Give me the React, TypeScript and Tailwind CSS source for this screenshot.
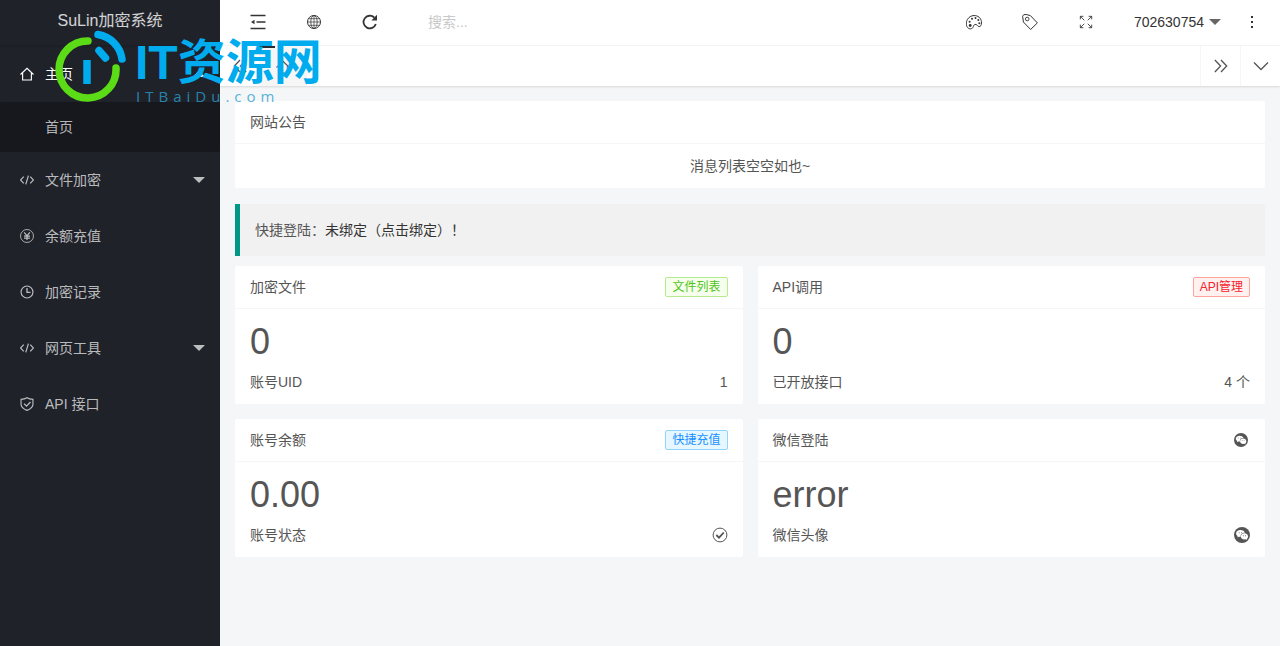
import type { ReactNode } from 'react';

type IconProps = { className?: string; children?: ReactNode };

function Icon({ className = 'size-4', children }: IconProps) {
  return (
    <svg
      viewBox="0 0 16 16"
      className={className}
      fill="none"
      stroke="currentColor"
      strokeWidth={1}
      aria-hidden="true"
    >
      {children}
    </svg>
  );
}

const HomeIcon = () => (
  <Icon className="size-3.5">
    <path d="M.6 8.6 8 1.4l7.4 7.2M3 6.6v8.2h10V6.6" strokeWidth={1.3} />
  </Icon>
);

const CodeIcon = () => (
  <Icon className="size-3.5">
    <path d="M4.3 4.2.6 8l3.7 3.8M11.7 4.2 15.4 8l-3.7 3.8M9.6 3 6.6 13" strokeWidth={1.4} />
  </Icon>
);

const YenIcon = () => (
  <Icon className="size-3.5">
    <circle cx="8" cy="8" r="7.4" />
    <path d="m4.8 3.8 3.2 4 3.2-4M8 7.8v4.8M4.6 8.2h6.8M4.6 10.4h6.8" strokeWidth={1.4} />
  </Icon>
);

const ClockIcon = () => (
  <Icon className="size-3.5">
    <circle cx="8" cy="8" r="6.8" strokeWidth={1.3} />
    <path d="M8 3.4v5h4" strokeWidth={1.5} />
  </Icon>
);

const ShieldIcon = () => (
  <Icon className="size-3.5">
    <path
      d="M8 .8c2 1.3 4.4 1.8 6.800 1.900v5.700c0 3.200-2.800 5.400-6.800 6.900-4-1.500-6.800-3.700-6.800-6.900V2.700C3.600 2.600 6 2.100 8 .8Z"
      strokeWidth={1.3}
    />
    <path d="m4.6 7.600 2.800 2.800L12 5.800" strokeWidth={1.5} />
  </Icon>
);

const MenuIcon = () => (
  <Icon>
    <path d="M.5 1.500h15M6.500 8h9M.5 14.500h15" strokeWidth={1.400} />
    <path d="M4.500 5.800v4.400L1 8Z" fill="currentColor" stroke="none" />
  </Icon>
);

const GlobeIcon = () => (
  <Icon>
    <circle cx="8" cy="8" r="6.500" />
    <ellipse cx="8" cy="8" rx="3.200" ry="6.500" strokeWidth={0.8} />
    <path d="M8 1.500v13M1.500 8h13M2.500 4.700h11M2.500 11.300h11" strokeWidth={0.7} />
  </Icon>
);

const RefreshIcon = () => (
  <Icon>
    <path d="M13.800 10A6.300 6.300 0 1 1 12.400 3.700" strokeWidth={1.800} />
    <path d="M15 .8v5.800H9.400Z" fill="currentColor" stroke="none" />
  </Icon>
);

const PaletteIcon = () => (
  <Icon>
    <path d="M2.300 14.200C-.3 12.200-.1 8.200 1.400 5.500 3.100 2.500 6.200 1.200 9.300 1.600c3.900.5 6.400 3.700 6.200 7.400-.1 2.400-1.100 3.700-2.400 3.600-1.500-.1-1.500-1.600-3-2.100-1.500-.4-2.400.6-2.700 1.900-.5 2-2.900 3.300-5.100 1.800Z" />
    <g fill="currentColor" stroke="none">
      <circle cx="4.200" cy="11.500" r="1.400" />
      <circle cx="3.600" cy="7.700" r="1" />
      <circle cx="6" cy="4.800" r="1" />
      <circle cx="9.500" cy="4.100" r="1" />
      <circle cx="12.300" cy="6" r="1" />
      <circle cx="13.300" cy="9.200" r="1" />
    </g>
  </Icon>
);

const TagIcon = () => (
  <Icon>
    <path d="M.6 2.200 1.400 8l7.200 7.500 6.800-6.600L8.400 1.600 4.200.5 1.800.7Z" strokeLinejoin="round" />
    <circle cx="5.200" cy="5" r="1.800" strokeWidth={0.9} />
  </Icon>
);

const ExpandIcon = () => (
  <Icon className="size-3.5">
    <path d="M1.500 5V1.500H5M11 1.500h3.500V5M14.500 11v3.500H11M5 14.500H1.500V11M1.500 1.500 6 6M14.500 1.500 10 6M14.500 14.500 10 10M1.500 14.500 6 10" />
  </Icon>
);

const DotsIcon = () => (
  <Icon>
    <g fill="currentColor" stroke="none">
      <rect x="7" y="2" width="2" height="2" />
      <rect x="7" y="7" width="2" height="2" />
      <rect x="7" y="12" width="2" height="2" />
    </g>
  </Icon>
);

const DoubleChevron = ({ className }: IconProps) => (
  <Icon className={className}>
    <path d="M1 1.200 7.500 8 1 14.800M8 1.200 14.500 8 8 14.800" strokeWidth={1.500} />
  </Icon>
);

const ChevronDown = () => (
  <Icon>
    <path d="m1 4.500 7 7 7-7" strokeWidth={1.300} />
  </Icon>
);

const CheckCircle = () => (
  <Icon>
    <circle cx="8" cy="8" r="6.900" />
    <path d="m4.300 8 2.700 2.700 4.800-5.200" strokeWidth={1.800} />
  </Icon>
);

const WechatIcon = ({ className }: IconProps) => (
  <Icon className={className}>
    <circle cx="8" cy="8" r="8" fill="currentColor" stroke="none" />
    <g fill="#fff" stroke="none">
      <path d="M6.400 3.100c-2.500 0-4.300 1.500-4.300 3.500 0 1.100.6 2 1.600 2.600l-.4 1.400 1.600-.9 1.700.2c-.3-2.500 1.700-4.200 4.200-4.200-.4-1.500-2.200-2.600-4.400-2.600Z" />
      <path d="M14.100 9.400c0-1.700-1.600-3.100-3.600-3.100S6.900 7.700 6.900 9.400s1.600 3.100 3.600 3.100l1.400-.2 1.300.8-.3-1.200c.8-.7 1.200-1.500 1.200-2.500Z" />
    </g>
    <g fill="currentColor" stroke="none">
      <circle cx="5.100" cy="5.700" r=".5" />
      <circle cx="7.700" cy="5.700" r=".5" />
      <circle cx="9.300" cy="8.700" r=".5" />
      <circle cx="11.500" cy="8.700" r=".5" />
    </g>
  </Icon>
);

function Caret({ className = '' }: { className?: string }) {
  return (
    <svg viewBox="0 0 12 6" className={`h-1.5 w-3 ${className}`} fill="currentColor" aria-hidden="true">
      <path d="M0 0h12L6 6Z" />
    </svg>
  );
}

const menuItems = [
  { label: '文件加密', icon: <CodeIcon />, expandable: true },
  { label: '余额充值', icon: <YenIcon /> },
  { label: '加密记录', icon: <ClockIcon /> },
  { label: '网页工具', icon: <CodeIcon />, expandable: true },
  { label: 'API 接口', icon: <ShieldIcon /> },
];

function Sidebar() {
  return (
    <aside className="w-[220px] shrink-0 bg-[#20222a] text-white/70">
      <div className="flex h-[45px] items-center justify-center pb-1 text-base text-white/80 shadow-[0_1px_2px_rgba(0,0,0,0.15)]">
        SuLin加密系统
      </div>
      <nav className="pt-px">
        <a href="#home" className="flex h-14 items-center gap-[11px] pr-[15px] pl-5 text-white">
          <HomeIcon />
          <span className="flex-1">主页</span>
          <Caret className="rotate-180" />
        </a>
        <a href="#index" className="flex h-[50px] items-center rounded-xs bg-[#17181d] pl-[45px]">
          首页
        </a>
        {menuItems.map((item) => (
          <a key={item.label} href="#menu" className="flex h-14 items-center gap-[11px] pr-[15px] pl-5">
            {item.icon}
            <span className="flex-1">{item.label}</span>
            {item.expandable && <Caret />}
          </a>
        ))}
      </nav>
    </aside>
  );
}

function HeaderButton({ label, children }: { label: string; children: ReactNode }) {
  return (
    <button type="button" aria-label={label} className="flex h-full w-14 items-center justify-center">
      {children}
    </button>
  );
}

function Header() {
  return (
    <header className="flex h-[46px] items-center border-b border-[#f6f6f6] bg-white pr-2 pb-px pl-2.5 text-[#333]">
      <HeaderButton label="侧边伸缩">
        <MenuIcon />
      </HeaderButton>
      <HeaderButton label="前台">
        <GlobeIcon />
      </HeaderButton>
      <HeaderButton label="刷新">
        <RefreshIcon />
      </HeaderButton>
      <input
        type="text"
        aria-label="搜索"
        placeholder="搜索..."
        className="ml-[30px] w-40 min-w-0 bg-transparent outline-none placeholder:text-[#c8c8c8]"
      />
      <div className="ml-auto flex h-full items-center">
        <HeaderButton label="主题">
          <PaletteIcon />
        </HeaderButton>
        <HeaderButton label="便签">
          <TagIcon />
        </HeaderButton>
        <HeaderButton label="全屏">
          <ExpandIcon />
        </HeaderButton>
        <button type="button" className="flex h-full items-center gap-[5px] pr-[11px] pl-5">
          702630754
          <Caret className="text-[#666]" />
        </button>
        <button type="button" aria-label="更多" className="flex h-full w-10 items-center justify-center">
          <DotsIcon />
        </button>
      </div>
    </header>
  );
}

function TabsBar() {
  return (
    <div className="flex h-10 bg-white text-[#555] shadow-[0_1px_2px_rgba(0,0,0,0.12)]">
      <button type="button" aria-label="向左" className="flex w-[39px] items-center justify-center">
        <DoubleChevron className="size-3.5 rotate-180" />
      </button>
      <button
        type="button"
        aria-label="首页"
        className="flex w-12 flex-col items-center justify-between bg-[#f6f6f6] pb-3"
      >
        <span className="h-0.5 w-4 self-start bg-[#292b34]" />
        <HomeIcon />
      </button>
      <button
        type="button"
        aria-label="向右"
        className="ml-auto flex w-10 items-center justify-center border-l border-[#f6f6f6]"
      >
        <DoubleChevron className="size-3.5" />
      </button>
      <button
        type="button"
        aria-label="标签操作"
        className="flex w-10 items-center justify-center border-l border-[#f6f6f6]"
      >
        <ChevronDown />
      </button>
    </div>
  );
}

type CardProps = { title: string; action?: ReactNode; children: ReactNode };

function Card({ title, action, children }: CardProps) {
  return (
    <section className="rounded-xs bg-white">
      <div className="flex h-[43px] items-center justify-between border-b border-[#f6f6f6] px-[15px]">
        <h2>{title}</h2>
        {action}
      </div>
      {children}
    </section>
  );
}

type StatCardProps = {
  title: string;
  action: ReactNode;
  value: string;
  label: string;
  extra: ReactNode;
};

function StatCard({ title, action, value, label, extra }: StatCardProps) {
  return (
    <Card title={title} action={action}>
      <div className="px-[15px] pt-[15px] pb-2.5">
        <p className="text-4xl/9">{value}</p>
        <div className="mt-2.5 flex h-6 items-center justify-between">
          <span>{label}</span>
          {extra}
        </div>
      </div>
    </Card>
  );
}

function BadgeLink({ className, children }: { className: string; children: ReactNode }) {
  return (
    <a href="#open" className={`flex h-5 items-center rounded-xs border px-1.5 text-xs ${className}`}>
      {children}
    </a>
  );
}

function Watermark() {
  return (
    <div className="pointer-events-none absolute top-[30px] left-[55px] flex gap-2">
      <svg viewBox="0 0 72 72" className="size-[72px]" fill="none" strokeLinecap="round" strokeWidth={7.5}>
        <path d="M33 11A28.500 28.500 0 1 0 61 38" stroke="#5bdc16" />
        <path d="M43 4.500A29 29 0 0 1 67 29" stroke="#00abee" />
        <path d="m44 20.500 6.500 7.500" stroke="#00abee" />
        <path d="M32 30v24" stroke="#00abee" strokeLinecap="butt" />
      </svg>
      <div className="pt-2.5">
        <div className="flex items-baseline text-5xl/[46px] font-bold text-[#00abee]">
          <span>IT</span>
          <span>资源网</span>
        </div>
        {/* one flex item per letter gives the wide-set domain line */}
        <div className="flex gap-[5px] pl-px font-['Open_Sans',sans-serif] text-[15px]/5 text-[#2b9fcf]/80">
          {[...'ITBaiDu.com'].map((letter, i) => (
            <span key={i}>{letter}</span>
          ))}
        </div>
      </div>
    </div>
  );
}

export default function App() {
  return (
    <div className="relative flex min-h-screen bg-[#f5f6f8] font-['Liberation_Sans','Noto_Sans_CJK_SC',sans-serif] text-sm text-[#555]">
      <Sidebar />
      <div className="min-w-0 flex-1">
        <Header />
        <TabsBar />
        <main className="p-[15px]">
          <Card title="网站公告">
            <p className="flex h-11 items-center justify-center">消息列表空空如也~</p>
          </Card>
          <div className="mt-4 flex h-[52px] items-center rounded-r-xs border-l-5 border-[#009688] bg-[#f1f1f1] pl-[15px]">
            快捷登陆：
            <a href="#bind" className="text-[#333]">
              未绑定（点击绑定）！
            </a>
          </div>
          <div className="mt-2.5 grid grid-cols-2 gap-[15px]">
            <StatCard
              title="加密文件"
              action={<BadgeLink className="border-[#b7eb8f] bg-[#f6ffed] text-[#52c41a]">文件列表</BadgeLink>}
              value="0"
              label="账号UID"
              extra={<span>1</span>}
            />
            <StatCard
              title="API调用"
              action={<BadgeLink className="border-[#ffa39e] bg-[#fff1f0] text-[#f5222d]">API管理</BadgeLink>}
              value="0"
              label="已开放接口"
              extra={<span>4 个</span>}
            />
            <StatCard
              title="账号余额"
              action={<BadgeLink className="border-[#91d5ff] bg-[#e6f7ff] text-[#1890ff]">快捷充值</BadgeLink>}
              value="0.00"
              label="账号状态"
              extra={<CheckCircle />}
            />
            <StatCard
              title="微信登陆"
              action={<WechatIcon className="mr-0.5 size-3.5" />}
              value="error"
              label="微信头像"
              extra={<WechatIcon />}
            />
          </div>
        </main>
      </div>
      <Watermark />
    </div>
  );
}
